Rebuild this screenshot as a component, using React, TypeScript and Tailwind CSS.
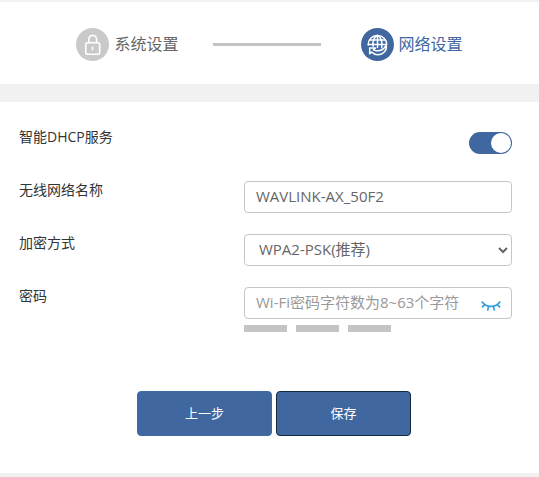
import { useState } from 'react';
import type { ReactNode } from 'react';

const controlClass =
  'block w-full h-8 rounded border border-[#c6c6c6] bg-white pb-0.5 text-[15px] text-[#666] placeholder:text-[#999] outline-none focus:border-[#4067a0]';

const buttonClass =
  'w-[135px] h-[45px] rounded border bg-[#4067a0] text-[13px] text-white cursor-pointer hover:bg-[#365889]';

function LockIcon() {
  return (
    <svg viewBox="0 0 33 33" className="w-[33px] h-[33px]" fill="none" aria-hidden="true">
      <circle cx="16.5" cy="16.5" r="16.5" fill="#c9c9c9" />
      <rect x="9.7" y="14.7" width="14" height="11.6" rx="2" stroke="#fff" strokeWidth="1.6" />
      <path d="M12.8 14.5v-3.2a3.9 3.9 0 0 1 7.8 0v3.2" stroke="#fff" strokeWidth="1.6" />
      <path d="M16.5 18.5v3.8" stroke="#fff" strokeWidth="1.5" />
    </svg>
  );
}

function GlobeIcon() {
  return (
    <svg viewBox="0 0 33 33" className="w-[33px] h-[33px]" fill="none" aria-hidden="true">
      <circle cx="16.5" cy="16.5" r="16.5" fill="#4067a0" />
      <g stroke="#fff" strokeWidth="1.5" strokeLinecap="round" strokeLinejoin="round">
        <path d="M7.2 17a9.300 9.300 0 0 1 18.600-.5" />
        <path d="M16.500 7.500v12M8.600 12h15.800M7.400 16.600h18" />
        <path d="M12.200 18.200c-.8-4.500.4-8.500 4.300-10.800 3.900 2.300 5.100 6.800 4.200 12" />
        <path d="M8.700 25.800v-5.900h5.800l-2 2c3.600 2 9.600.9 12.800-4.600.9 5.200-3.300 9.400-8.800 9.400-2.300 0-4.400-1-5.800-2.600z" />
      </g>
    </svg>
  );
}

function ClosedEyeIcon() {
  return (
    <svg viewBox="0 0 20 12" className="w-5 h-3" fill="none" stroke="#33a0dc" strokeWidth="1.7" aria-hidden="true">
      <path d="M.8 1.500c4.600 6.600 13.800 6.600 18.400 0" />
      <path d="M4 4.400.9 7.400M7.700 6.200l-1.200 4.400M12.300 6.200l1.200 4.400M16 4.400l3.100 3" />
    </svg>
  );
}

function Row({ label, htmlFor, children }: { label: string; htmlFor: string; children: ReactNode }) {
  return (
    <div className="flex items-start">
      <label htmlFor={htmlFor} className="w-[225px] shrink-0 text-sm leading-[18px] text-[#333]">
        {label}
      </label>
      <div className="flex-1 min-w-0 min-h-8">{children}</div>
    </div>
  );
}

export default function App() {
  const [dhcp, setDhcp] = useState(true);
  const [ssid, setSsid] = useState('WAVLINK-AX_50F2');
  const [password, setPassword] = useState('');
  const [visible, setVisible] = useState(false);

  return (
    <div className="min-h-screen bg-[#f1f1f1] pt-0.5 font-['Open_Sans','Noto_Sans_CJK_SC',sans-serif]">
      <header className="flex items-center justify-center h-[82px] bg-white pt-0.5 text-base text-[#666]">
        <div className="flex items-center gap-[5px]">
          <LockIcon />
          <span>系统设置</span>
        </div>
        <div className="w-[108px] h-[3px] ml-[34px] mr-10 bg-[#c4c4c4]" />
        <div className="flex items-center gap-[5px] text-[#4067a0]">
          <GlobeIcon />
          <span>网络设置</span>
        </div>
      </header>

      <form className="mt-[18px] bg-white pt-[26px] pb-[37px]" onSubmit={(e) => e.preventDefault()}>
        <div className="flex flex-col gap-[21px] pl-[19px] pr-[27px]">
          <Row label="智能DHCP服务" htmlFor="dhcp">
            <div className="flex justify-end pt-1">
              <input
                id="dhcp"
                type="checkbox"
                role="switch"
                checked={dhcp}
                onChange={(e) => setDhcp(e.target.checked)}
                className="flex items-center appearance-none w-[43px] h-[22px] px-px rounded-full bg-[#c4c4c4] cursor-pointer checked:justify-end checked:bg-[#4067a0] before:w-5 before:h-5 before:rounded-full before:bg-white"
              />
            </div>
          </Row>

          <Row label="无线网络名称" htmlFor="ssid">
            <input
              id="ssid"
              type="text"
              value={ssid}
              onChange={(e) => setSsid(e.target.value)}
              className={`${controlClass} px-[11px]`}
            />
          </Row>

          <Row label="加密方式" htmlFor="encryption">
            <select id="encryption" className={`${controlClass} pl-[10px]`}>
              <option>WPA2-PSK(推荐)</option>
              <option>WPA3-SAE</option>
            </select>
          </Row>

          <Row label="密码" htmlFor="password">
            <div className="relative">
              <input
                id="password"
                type={visible ? 'text' : 'password'}
                value={password}
                onChange={(e) => setPassword(e.target.value)}
                placeholder="Wi-Fi密码字符数为8~63个字符"
                className={`${controlClass} pl-[11px] pr-10`}
              />
              <button
                type="button"
                aria-label="显示密码"
                onClick={() => setVisible(!visible)}
                className="absolute right-[11px] top-[13px] cursor-pointer"
              >
                <ClosedEyeIcon />
              </button>
            </div>
            <div className="flex gap-[9px] mt-1.5">
              <span className="w-[43px] h-[7px] bg-[#c4c4c4]" />
              <span className="w-[43px] h-[7px] bg-[#c4c4c4]" />
              <span className="w-[43px] h-[7px] bg-[#c4c4c4]" />
            </div>
          </Row>
        </div>

        <div className="flex justify-center gap-1 mt-[59px] pl-[9px]">
          <button type="button" className={`${buttonClass} border-[#3a6ea5]`}>
            上一步
          </button>
          <button type="submit" className={`${buttonClass} border-[#122b40]`}>
            保存
          </button>
        </div>
      </form>
    </div>
  );
}
